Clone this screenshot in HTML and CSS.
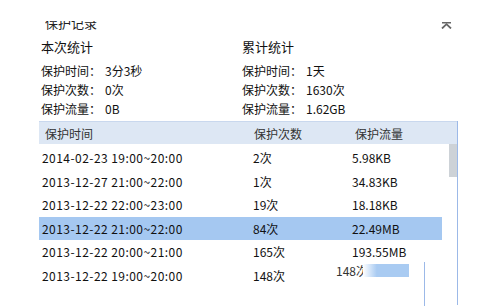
FILE: index.html
```html
<!DOCTYPE html>
<html lang="zh-CN">
<head>
  <meta charset="UTF-8">
  <title>保护记录</title>
  <link rel="stylesheet" href="styles.css">
</head>
<body>

<div class="panel">
  <!-- 标题栏 -->
  <div class="top">
    <div class="title"><span>保护记录</span></div>
    <svg class="collapse" width="11" height="7" viewBox="0 0 11 7">
      <rect x="1" y="0" width="9" height="1.5" fill="#666"/>
      <path d="M1 6.5 L5.5 2.2 L10 6.5" stroke="#666" stroke-width="1.8" fill="none"/>
    </svg>
  </div>

  <!-- 统计 -->
  <div class="stats">
    <div class="col">
      <div class="head">本次统计</div>
      <div class="row"><span class="lbl">保护时间：</span>3分3秒</div>
      <div class="row"><span class="lbl">保护次数：</span>0次</div>
      <div class="row"><span class="lbl">保护流量：</span>0B</div>
    </div>
    <div class="col">
      <div class="head">累计统计</div>
      <div class="row"><span class="lbl">保护时间：</span>1天</div>
      <div class="row"><span class="lbl">保护次数：</span>1630次</div>
      <div class="row"><span class="lbl">保护流量：</span>1.62GB</div>
    </div>
  </div>

  <!-- 记录表 -->
  <div class="table">
    <div class="thead">
      <span class="c1">保护时间</span>
      <span class="c2">保护次数</span>
      <span class="c3">保护流量</span>
    </div>
    <div class="tbody">
      <div class="list">
        <div class="tr"><span class="c1">2014-02-23 19:00~20:00</span><span class="c2">2次</span><span class="c3">5.98KB</span></div>
        <div class="tr"><span class="c1">2013-12-27 21:00~22:00</span><span class="c2">1次</span><span class="c3">34.83KB</span></div>
        <div class="tr"><span class="c1">2013-12-22 22:00~23:00</span><span class="c2">19次</span><span class="c3">18.18KB</span></div>
        <div class="tr sel"><span class="c1">2013-12-22 21:00~22:00</span><span class="c2">84次</span><span class="c3">22.49MB</span></div>
        <div class="tr"><span class="c1">2013-12-22 20:00~21:00</span><span class="c2">165次</span><span class="c3">193.55MB</span></div>
        <div class="tr"><span class="c1">2013-12-22 19:00~20:00</span><span class="c2">148次</span><span class="c3"></span></div>
      </div>
      <div class="scroll"><div class="thumb"></div></div>

      <!-- 截图残影 -->
      <div class="ghost">148次</div>
      <div class="ghost-bar"></div>
      <div class="ghost-line"></div>
    </div>
  </div>
</div>

</body>
</html>
```

FILE: styles.css
```css
body {
  margin: 0;
  background: #fff;
  color: #111;
  font-family: "Noto Sans CJK SC", "Noto Sans", sans-serif;
  font-size: 12px;
  overflow: hidden;
}
.panel {
  width: 419px;
  margin-left: 39px;
  height: 306px;
  overflow: hidden;
}
.top {
  height: 37px;
  display: flex;
  justify-content: space-between;
  align-items: flex-start;
}
.title {
  margin: 21px 0 0 6px;
  height: 9px;
  overflow: hidden;
  font-size: 13px;
  color: #222;
}
.title span {
  display: block;
  line-height: 14px;
  margin-top: -5px;
}
.collapse {
  margin: 22px 6px 0 0;
}
.stats {
  display: grid;
  grid-template-columns: 201px 1fr;
}
.col {
  padding-left: 2px;
}
.head {
  font-size: 13px;
  line-height: 20px;
  margin-bottom: 3.5px;
}
.row {
  line-height: 19px;
  display: flex;
}
.lbl {
  width: 64px;
}
.table {
  margin-top: 3.5px;
  border-right: 1px solid #9cb9e8;
  height: 184px;
}
.thead {
  height: 22px;
  background: #dde7f4;
  border-top: 1px solid #c9d8ee;
  display: flex;
  align-items: center;
  color: #333;
}
.thead .c1 { width: 209px; padding-left: 6px; letter-spacing: 0; }
.thead .c2 { width: 101px; }
.tbody {
  position: relative;
  display: flex;
}
.list {
  width: 404px;
  padding-top: 2px;
}
.tr {
  height: 23.5px;
  display: flex;
  align-items: center;
}
.tr.sel {
  background: #a5c8f1;
}
.c1 { width: 211px; padding-left: 3px; letter-spacing: 0.45px; }
.c2 { width: 99px; }
.scroll {
  width: 15px;
  display: flex;
  justify-content: flex-end;
}
.thumb {
  width: 8px;
  height: 33px;
  background: #cdd2d7;
}
.ghost {
  position: absolute;
  left: 297px;
  top: 120px;
  line-height: 14px;
  color: #333;
  background: linear-gradient(90deg, #fff 0, transparent 30%, transparent 70%, #fff 100%);
}
.ghost-bar {
  position: absolute;
  left: 324px;
  top: 120px;
  width: 46px;
  height: 13px;
  background: linear-gradient(90deg, #fff 0, #a9cbf2 30%);
}
.ghost-line {
  position: absolute;
  left: 385px;
  top: 118px;
  width: 1px;
  height: 60px;
  background: #9cb9e8;
}
```
